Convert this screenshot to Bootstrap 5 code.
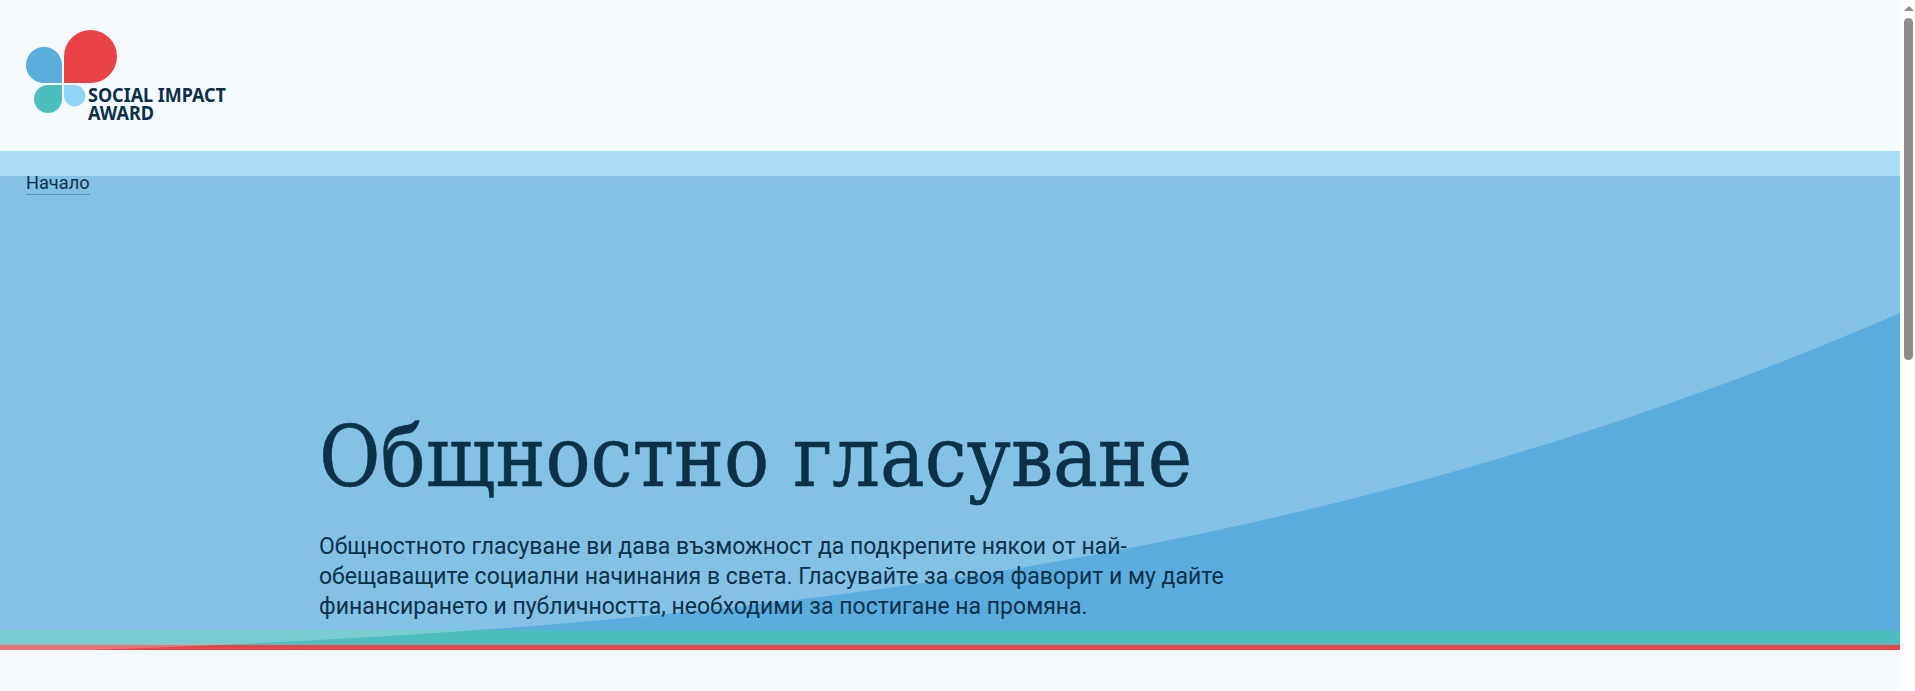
<!DOCTYPE html>
<html lang="bg">
<head>
    <meta charset="UTF-8">
    <meta name="viewport" content="width=device-width, initial-scale=1.0">
    <title>Общностно гласуване</title>
    <link href="https://cdn.jsdelivr.net/npm/bootstrap@5.3.3/dist/css/bootstrap.min.css" rel="stylesheet">
    <style>
        body { background: #f5faff; color: #0d3049; font-family: Roboto, "Noto Sans", sans-serif; padding-right: 15px; overflow: hidden; }
        .site-head { height: 151px; padding: 30px 0 0 26px; }
        .logo-word { font-family: "Noto Sans", sans-serif; font-weight: 700; font-size: 19.5px; fill: #0d3049; }
        .top-band { height: 25px; background: #aadcf7; }
        .hero-wrap { height: 474px; background: #5aaddd; }
        .hero-tint { top: 0; left: 0; width: 100%; height: 100%; }
        .crumb-row { padding: 21px 0 0 26px; margin-top: -25px; z-index: 1; }
        .crumb-link { color: #0d3049; font-size: 18.2px; line-height: 22px; padding-bottom: 1px; text-decoration: none; border-bottom: 1px solid #5f93b5; }
        .hero-body { padding-left: 319px; z-index: 1; }
        .hero-title { font-family: "DejaVu Serif Condensed", "Liberation Serif", serif; font-size: 83.4px; line-height: 100px; font-weight: 400; -webkit-text-stroke: 0.5px #0d3049; margin: 0 0 24px; }
        .hero-text { width: 920px; font-size: 23px; line-height: 30px; margin: 0 0 8px; }
        .strip-teal { height: 15px; background: #4dbdc0; }
        .strip-red { height: 5px; background: #eb4247; }
        .page-scroll { top: 0; right: 0; bottom: 0; width: 15px; background: #fdfdfd; }
        .page-scroll-arrow { top: 6px; left: 4px; width: 0; height: 0; border: 5px solid transparent; border-top: 0; border-bottom: 5px solid #8c8c8c; }
        .page-scroll-thumb { top: 18px; left: 4px; width: 9px; height: 342px; background: #8c8c8c; border-radius: 5px; }
    </style>
</head>
<body>
    <header class="site-head">
        <svg width="240" height="100" viewBox="26 30 240 100" role="img" aria-label="Social Impact Award">
            <path fill="#eb4247" d="M64 83V56.5A26.5 26.5 0 1 1 90.500 83Z"/>
            <path fill="#5aaddd" d="M62 83H44A18 18 0 1 1 62 65Z"/>
            <path fill="#4dbdc0" d="M62 85H48A14 14 0 1 0 62 99Z"/>
            <path fill="#90d5f5" d="M64 85H74.700A10.700 10.700 0 1 1 64 95.700Z"/>
            <text class="logo-word" x="88" y="102" textLength="138" lengthAdjust="spacingAndGlyphs">SOCIAL IMPACT</text>
            <text class="logo-word" x="88" y="120" textLength="66" lengthAdjust="spacingAndGlyphs">AWARD</text>
        </svg>
    </header>
    <div class="top-band"></div>
    <section class="hero-wrap position-relative d-flex flex-column">
        <svg class="hero-tint position-absolute" viewBox="0 0 1900 474" preserveAspectRatio="none" aria-hidden="true">
            <path fill="#fff" fill-opacity="0.25" d="M0 0H1900V137C1300 398 700 452.600 90 474H0Z"/>
        </svg>
        <nav class="crumb-row position-relative">
            <a class="crumb-link" href="#">Начало</a>
        </nav>
        <div class="hero-body position-relative mt-auto">
            <h1 class="hero-title">Общностно гласуване</h1>
            <p class="hero-text">Общностното гласуване ви дава възможност да подкрепите някои от най-обещаващите социални начинания в света. Гласувайте за своя фаворит и му дайте финансирането и публичността, необходими за постигане на промяна.</p>
        </div>
        <div class="strip-teal"></div>
        <div class="strip-red"></div>
    </section>
    <div class="page-scroll position-fixed" aria-hidden="true">
        <div class="page-scroll-arrow position-absolute"></div>
        <div class="page-scroll-thumb position-absolute"></div>
    </div>
</body>
</html>
